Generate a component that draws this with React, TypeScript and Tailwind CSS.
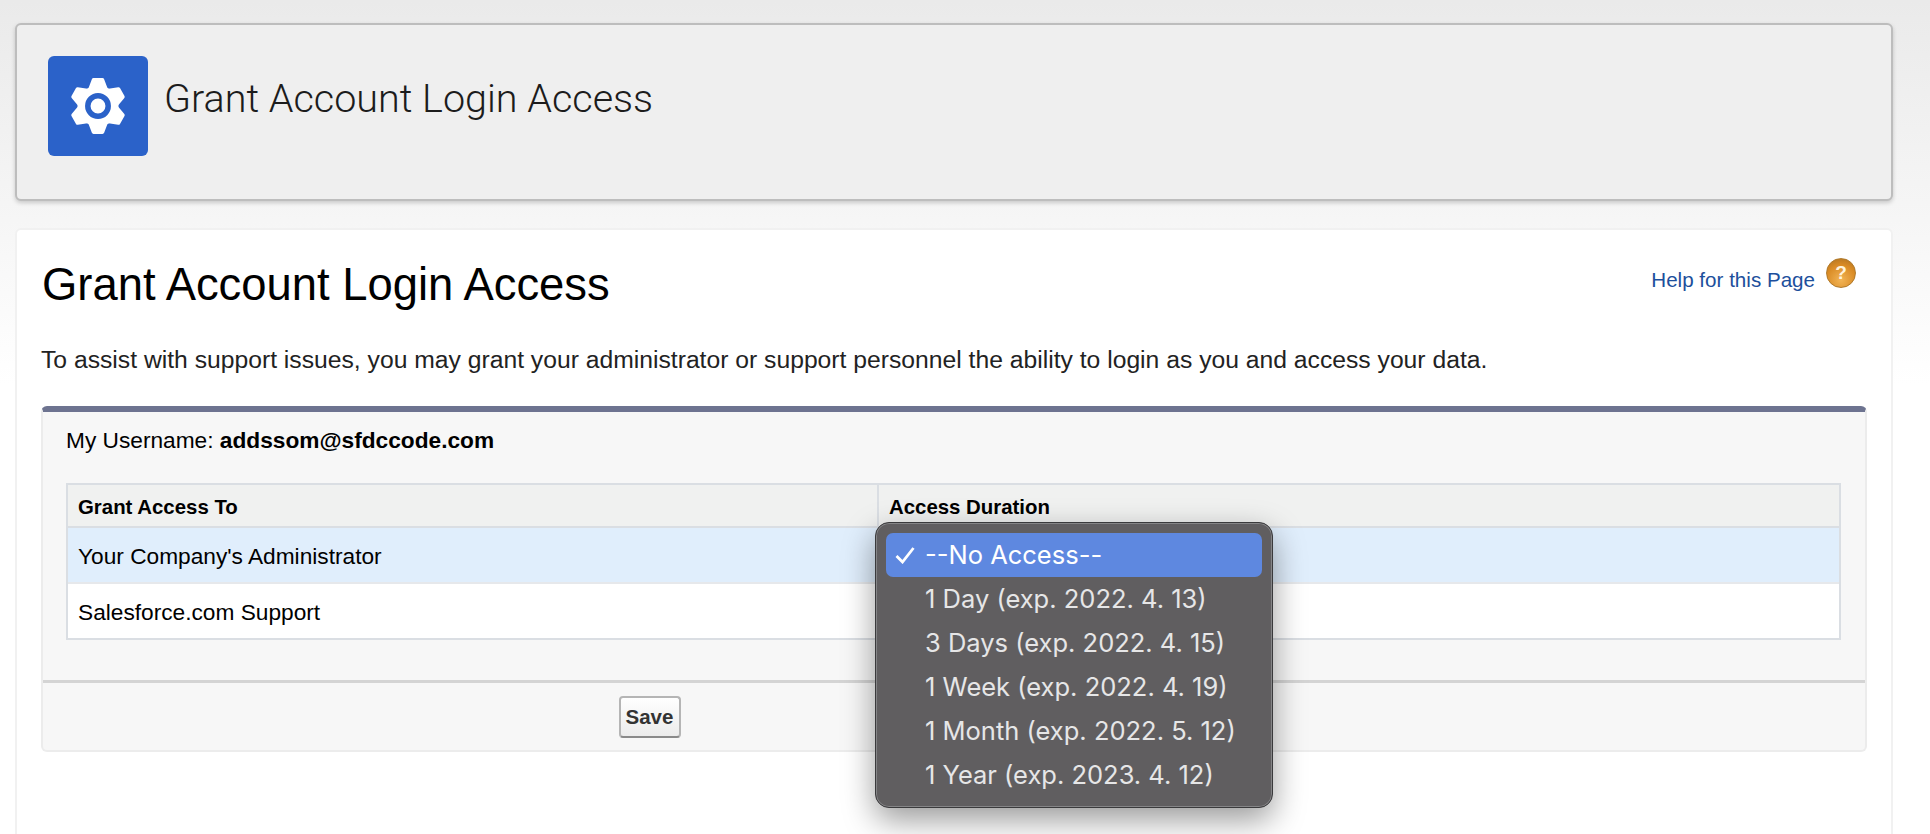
const options = [
  "1 Day (exp. 2022. 4. 13)",
  "3 Days (exp. 2022. 4. 15)",
  "1 Week (exp. 2022. 4. 19)",
  "1 Month (exp. 2022. 5. 12)",
  "1 Year (exp. 2023. 4. 12)",
];

function GearIcon() {
  const angles = [0, 60, 120, 180, 240, 300];
  return (
    <svg viewBox="0 0 100 100" className="w-[100px] h-[100px]">
      <circle cx="50" cy="50" r="20.5" fill="#fff" />
      {angles.map((a) => (
        <polygon
          key={a}
          points="42,33 58,33 54.5,23.75 45.5,23.75"
          fill="#fff"
          stroke="#fff"
          strokeWidth="3.5"
          strokeLinejoin="round"
          transform={`rotate(${a} 50 50)`}
        />
      ))}
      <circle cx="50" cy="50" r="10.2" fill="#fff" stroke="#2b62c9" strokeWidth="5.5" />
    </svg>
  );
}

function DurationMenu() {
  return (
    <div className="absolute left-0 top-[-6px] z-10 w-[398px] h-[286px] rounded-[14px] border border-[#3a3a3c] bg-[#605e60] px-[10px] pt-[10px] shadow-[0_12px_32px_rgba(0,0,0,0.4),inset_0_0_0_1px_#858587] font-['Inter',sans-serif] text-[25.5px] text-[#e6e6e7]">
      <div className="flex items-center h-[44px] rounded-[7px] bg-[#5e88e0] text-white">
        <svg viewBox="0 0 20 18" className="ml-[9px] w-[20px] h-[18px]">
          <path d="M1.5 10 L7.5 16 L18.5 2" fill="none" stroke="#fff" strokeWidth="2.8" />
        </svg>
        <span className="ml-[10px]">--No Access--</span>
      </div>
      {options.map((o) => (
        <div key={o} className="flex items-center h-[44px] pl-[39px] whitespace-nowrap">
          {o}
        </div>
      ))}
    </div>
  );
}

export default function App() {
  return (
    <div className="flex flex-col h-[834px] overflow-hidden pt-[23px] pl-[15px] pr-[37px] bg-gradient-to-b from-[#eaeaea] from-0% to-white to-[46%] font-['Liberation_Sans',Arial,sans-serif] text-black">
      <div className="flex items-start h-[178px] pt-[31px] pl-[31px] rounded-[6px] border-2 border-[#bdbdbd] bg-[#efefef] shadow-[0_2px_4px_rgba(0,0,0,0.18)]">
        <div className="w-[100px] h-[100px] rounded-[6px] bg-[#2b62c9]">
          <GearIcon />
        </div>
        <h1 className="ml-[16px] mt-[19px] font-['Roboto',sans-serif] font-light text-[39.5px] leading-[48px] text-[#1c1c1c]">
          Grant Account Login Access
        </h1>
      </div>

      <div className="flex-1 mt-[27px] px-[24px] rounded-t-[6px] border-2 border-b-0 border-[#f1f1f1] bg-white">
        <div className="flex justify-between">
          <h2 className="mt-[29px] ml-[1px] text-[45.4px] leading-[52px]">Grant Account Login Access</h2>
          <div className="flex mt-[28px] mr-[11px]">
            <a className="mt-[9px] text-[20.6px] leading-[26px] text-[#1d4f9c]">Help for this Page</a>
            <div className="flex items-center justify-center ml-[11px] w-[30px] h-[30px] rounded-full border border-[#b07a2c] bg-[radial-gradient(circle_at_50%_75%,#f2b455,#d98a24_60%,#a9701f)] text-[19px] font-bold text-[#fff3dc]">
              ?
            </div>
          </div>
        </div>

        <p className="mt-[35px] text-[24.7px] leading-[28px] text-[#222]">
          To assist with support issues, you may grant your administrator or support personnel the ability to login as you and access your data.
        </p>

        <div className="mt-[32px] rounded-[6px] border-2 border-t-[6px] border-[#ececec] border-t-[#6d7390] bg-[#f7f7f7]">
          <div className="px-[23px] pt-[15px] h-[71px] text-[22.7px] leading-[26px]">
            My Username: <b>addssom@sfdccode.com</b>
          </div>
          <div className="ml-[23px] mr-[24px] border-2 border-[#dadee3] text-[22.7px]">
            <div className="flex h-[43px] items-center bg-[#f0f1f0] border-b-2 border-[#dadee3] font-bold text-[20.4px]">
              <div className="w-[811px] h-full flex items-center pl-[10px] pt-[4px] border-r-2 border-[#dadee3]">Grant Access To</div>
              <div className="pl-[10px] pt-[4px]">Access Duration</div>
            </div>
            <div className="relative flex h-[56px] items-center pl-[10px] pt-[3px] bg-[#e0eefc] border-b-2 border-[#e6e8eb]">
              Your Company's Administrator
              <div className="absolute left-[807px] top-0">
                <DurationMenu />
              </div>
            </div>
            <div className="flex h-[54px] items-center pl-[10px] pt-[2px] bg-white">Salesforce.com Support</div>
          </div>
          <div className="mt-[40px] h-[70px] flex items-start justify-center pr-[609px] pt-[13px] border-t-[3px] border-[#d4d4d4]">
            <button className="w-[62px] h-[42px] rounded-[4px] border-2 border-[#b5b5b5] border-b-[#8a8a8a] bg-gradient-to-b from-white to-[#ececec] text-[20.5px] font-bold text-[#333]">
              Save
            </button>
          </div>
        </div>
      </div>
    </div>
  );
}
